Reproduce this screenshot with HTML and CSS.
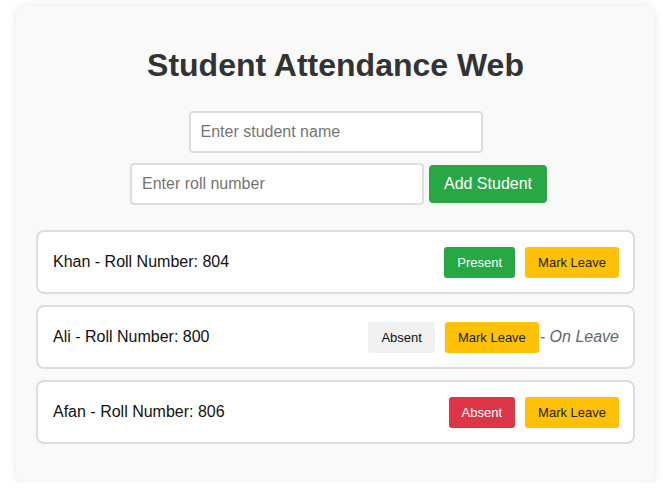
FILE: index.html
```html
<!DOCTYPE html>
<html>
<head>
<meta charset="utf-8">
<link rel="stylesheet" href="styles.css">
</head>
<body>
<div class="container">
  <h1 class="title">Student Attendance Web</h1>
  <div class="form">
    <div class="row">
      <input class="field" type="text" placeholder="Enter student name">
    </div>
    <div class="row row-second">
      <input class="field" type="text" placeholder="Enter roll number">
      <button class="add-btn">Add Student</button>
    </div>
  </div>
  <ul class="list">
    <li class="card">
      <span class="name">Khan - Roll Number: 804</span>
      <div class="actions">
        <button class="btn btn-present">Present</button>
        <button class="btn btn-leave">Mark Leave</button>
      </div>
    </li>
    <li class="card">
      <span class="name">Ali - Roll Number: 800</span>
      <div class="actions">
        <button class="btn btn-neutral">Absent</button>
        <button class="btn btn-leave">Mark Leave</button>
        <span class="leave-note">- On Leave</span>
      </div>
    </li>
    <li class="card">
      <span class="name">Afan - Roll Number: 806</span>
      <div class="actions">
        <button class="btn btn-absent">Absent</button>
        <button class="btn btn-leave">Mark Leave</button>
      </div>
    </li>
  </ul>
</div>
</body>
</html>
```

FILE: styles.css
```css
* { box-sizing: border-box; }

body {
  margin: 0;
  padding: 6px 0 0 16px;
  font-family: "Liberation Sans", Arial, sans-serif;
  background: #ffffff;
}

.container {
  width: 639px;
  background: #f9f9f9;
  border-radius: 10px;
  box-shadow: 0 0 10px rgba(0, 0, 0, 0.1);
  padding: 20px;
}

.title {
  margin: 21px 0 22px;
  text-align: center;
  font-size: 32px;
  font-weight: bold;
  color: #333333;
  line-height: 37px;
}

.form {
  display: flex;
  flex-direction: column;
  align-items: center;
}

.row {
  display: flex;
  justify-content: center;
  align-items: center;
}

.row-second {
  margin-left: 6px;
}

.field {
  width: 294px;
  height: 42px;
  margin: 5px 0;
  padding: 10px;
  border: 2px solid #dddddd;
  border-radius: 4px;
  font-family: "Liberation Sans", Arial, sans-serif;
  font-size: 16px;
  background: #ffffff;
  outline: none;
}

.field::placeholder { color: #757575; }

.add-btn {
  margin-left: 5px;
  width: 118px;
  height: 38px;
  padding: 0;
  border: none;
  border-radius: 4px;
  background: #28a745;
  color: #ffffff;
  font-family: "Liberation Sans", Arial, sans-serif;
  font-size: 16px;
}

.list {
  list-style: none;
  margin: 20px 0 19px;
  padding: 0;
  display: flex;
  flex-direction: column;
  gap: 11px;
}

.card {
  height: 64px;
  display: flex;
  align-items: center;
  justify-content: space-between;
  padding: 0 14px 0 15px;
  background: #ffffff;
  border: 2px solid #dddddd;
  border-radius: 8px;
}

.name {
  font-size: 16px;
  color: #111111;
}

.actions {
  display: flex;
  align-items: center;
}

.btn {
  margin-left: 10px;
  height: 31px;
  padding: 0 13px;
  border: none;
  border-radius: 3px;
  font-family: "Liberation Sans", Arial, sans-serif;
  font-size: 13px;
}

.btn-present { background: #28a745; color: #ffffff; }
.btn-leave { background: #ffc107; color: #222222; }
.btn-neutral { background: #f0f0f0; color: #111111; }
.btn-absent { background: #dc3545; color: #ffffff; }

.leave-note {
  margin-left: 1px;
  font-size: 16px;
  font-style: italic;
  color: #666666;
}
```
